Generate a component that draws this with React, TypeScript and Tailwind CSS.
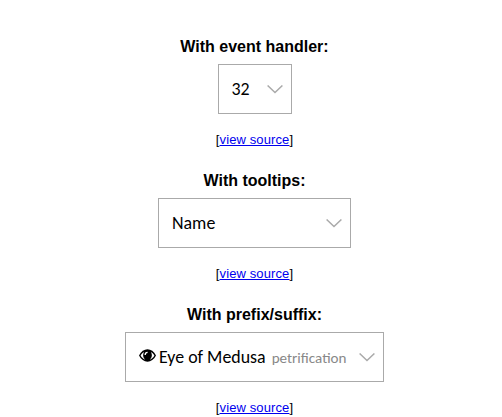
import type { ReactNode } from "react";

function Chevron() {
  return (
    <svg className="block h-[9px] w-4 shrink-0" viewBox="0 0 16 9" fill="none" stroke="#aaa" strokeWidth="1.5">
      <path d="M0.6 0.5 8 7.5 15.4 0.5" />
    </svg>
  );
}

function Eye() {
  return (
    <svg className="mr-[3px] -mt-[3px] h-[13px] w-[17px] shrink-0" viewBox="0 0 16 12">
      <path d="M0 6C2 2.200 4.800.2 8 .2S14 2.200 16 6c-2 3.800-4.800 5.800-8 5.800S2 9.800 0 6Z" />
      <path fill="#fff" d="M1.500 6.100C2.300 4.500 3.300 3.300 4.700 2.600 4.100 3.800 3.800 5 3.900 6c.1 1.600.8 2.900 2 3.900C4 9.300 2.500 8 1.500 6.100ZM14.500 6.100C13.700 4.500 12.700 3.300 11.300 2.600c.6 1.200.9 2.400.8 3.400-.1 1.600-.8 2.900-2 3.900 1.900-.6 3.400-1.900 4.400-3.800Z" />
      <path fill="none" stroke="#fff" strokeWidth="1.200" d="M5.800 5.500C5.800 4 6.700 3.100 8.100 3.100" />
    </svg>
  );
}

function Example({ title, width, children }: { title: string; width: string; children: ReactNode }) {
  return (
    <section className="flex h-[134px] flex-col items-center">
      <h2 className="h-[26px] text-base leading-[18px] font-bold whitespace-nowrap">{title}</h2>
      <button className={`flex h-[50px] shrink-0 items-center border border-[#aaa] bg-white pr-2 pl-[13px] text-left font-[Carlito,Lato,sans-serif] text-[17.9px] ${width}`}>
        {children}
        <span className="ml-auto"><Chevron /></span>
      </button>
      <div className="mt-[18px] text-[13px] leading-4 tracking-[0.12px] whitespace-nowrap">
        [<a href="#source" className="text-[#0000ee] underline">view source</a>]
      </div>
    </section>
  );
}

export default function App() {
  return (
    <main className="h-[417px] overflow-hidden bg-white pt-[38px] pl-[7px] font-['Liberation_Sans',Arial,sans-serif] text-black">
      <div className="flex w-[495px] flex-col">
        <Example title="With event handler:" width="w-[74px]"><span>32</span></Example>
        <Example title="With tooltips:" width="w-[193px]"><span>Name</span></Example>
        <Example title="With prefix/suffix:" width="w-[259px]">
          <Eye />
          <span className="whitespace-nowrap">Eye of Medusa</span>
          <span className="mt-0.5 ml-1.5 text-[15.1px] font-light text-[#888]">petrification</span>
        </Example>
      </div>
    </main>
  );
}
